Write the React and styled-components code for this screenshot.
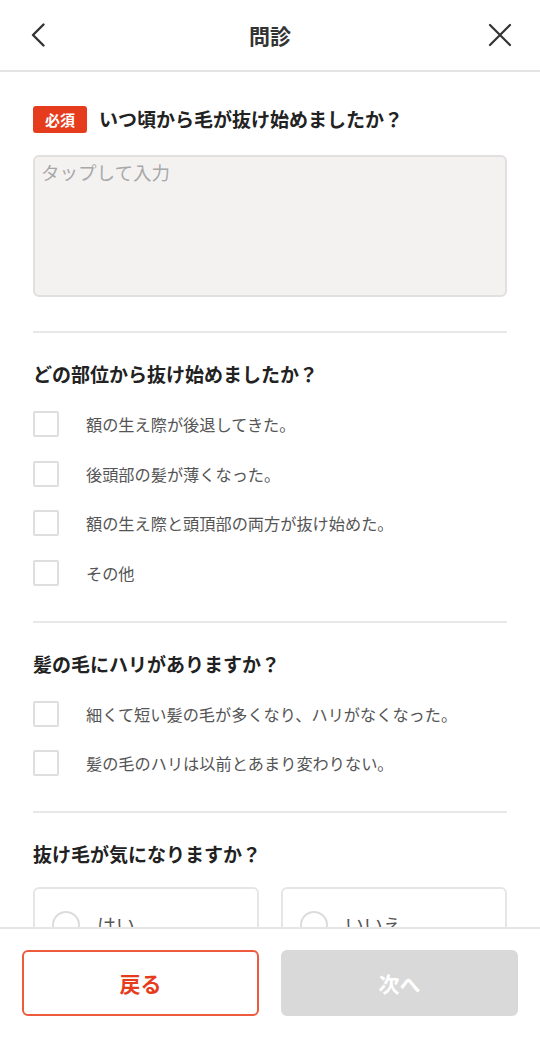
import React from "react";
import styled, { createGlobalStyle } from "styled-components";

const GlobalStyle = createGlobalStyle`
  html, body {
    margin: 0;
    padding: 0;
    background: #ffffff;
  }
  body {
    font-family: "Noto Sans CJK JP", "Noto Sans", sans-serif;
    color: #222;
  }
  * {
    box-sizing: border-box;
  }
`;

const Page = styled.div`
  display: flex;
  flex-direction: column;
  height: 100vh;
  overflow: hidden;
`;

const Header = styled.header`
  flex: none;
  height: 72px;
  display: flex;
  align-items: center;
  justify-content: space-between;
  padding: 0 28px 0 28px;
  border-bottom: 2px solid #e4e4e4;
`;

const IconButton = styled.button`
  width: 24px;
  height: 24px;
  padding: 0;
  border: none;
  background: none;
  display: flex;
  align-items: center;
  justify-content: center;
  color: #333;
`;

const Title = styled.h1`
  margin: 0;
  font-size: 21px;
  font-weight: 700;
  color: #333;
`;

const Content = styled.main`
  flex: 1;
  overflow: hidden;
  padding: 0 33px;
`;

const Section = styled.section`
  padding: ${(p) => (p.$first ? "33px 0 34px" : "28px 0 34.5px")};
  border-bottom: ${(p) => (p.$last ? "none" : "2px solid #e8e8e8")};
`;

const QuestionRow = styled.div`
  display: flex;
  align-items: center;
  gap: 12px;
  height: 28px;
`;

const Badge = styled.span`
  display: inline-flex;
  align-items: center;
  justify-content: center;
  width: 54px;
  height: 27px;
  border-radius: 3px;
  background: #e63c1e;
  color: #fff;
  font-size: 15px;
  font-weight: 700;
`;

const Question = styled.h2`
  margin: 0;
  font-size: 19px;
  line-height: 26px;
  font-weight: 700;
  color: #222;
`;

const TextArea = styled.textarea`
  display: block;
  width: 100%;
  height: 142px;
  margin-top: 22px;
  padding: 2px 6px;
  resize: none;
  border: 2px solid #e2e0df;
  border-radius: 6px;
  background: #f4f2f1;
  font-family: inherit;
  font-size: 18.5px;
  color: #333;

  &::placeholder {
    color: #a8a8a8;
  }
`;

const Options = styled.div`
  display: flex;
  flex-direction: column;
  gap: 23.7px;
  margin-top: 24px;
`;

const CheckRow = styled.label`
  display: flex;
  align-items: center;
  gap: 27px;
  height: 26px;
`;

const Box = styled.span`
  flex: none;
  width: 26px;
  height: 26px;
  border: 2px solid #dedede;
  border-radius: 2px;
  background: #fff;
`;

const OptionText = styled.span`
  font-size: 16.2px;
  color: #555;
`;

const RadioGrid = styled.div`
  display: grid;
  grid-template-columns: 1fr 1fr;
  gap: 22px;
  margin-top: 20px;
`;

const RadioCard = styled.label`
  display: flex;
  align-items: flex-start;
  gap: 17px;
  height: 80px;
  padding: 22px 17px;
  border: 2px solid #e6e6e6;
  border-radius: 6px;
`;

const Circle = styled.span`
  flex: none;
  width: 28px;
  height: 28px;
  border: 2px solid #dcdcdc;
  border-radius: 50%;
`;

const RadioText = styled.span`
  font-size: 19px;
  line-height: 28px;
  color: #555;
`;

const Footer = styled.footer`
  flex: none;
  display: grid;
  grid-template-columns: 1fr 1fr;
  gap: 22px;
  padding: 21px 22px 24px;
  border-top: 2px solid #e6e6e6;
  background: #fff;
`;

const FooterButton = styled.button`
  height: 66px;
  border-radius: 6px;
  font-family: inherit;
  font-size: 21px;
  font-weight: 700;
  border: ${(p) => (p.$outline ? "2px solid #ee5a3e" : "none")};
  background: ${(p) => (p.$outline ? "#fff" : "#d9d9d9")};
  color: ${(p) => (p.$outline ? "#e63c1e" : "#fff")};
`;

const ChevronLeft = () => (
  <svg width="24" height="24" viewBox="0 0 24 24" fill="none">
    <path
      d="M15.5 1.5L5 12l10.5 10.5"
      stroke="currentColor"
      strokeWidth="2.4"
      strokeLinecap="round"
      strokeLinejoin="round"
    />
  </svg>
);

const CloseIcon = () => (
  <svg width="24" height="24" viewBox="0 0 24 24" fill="none">
    <path
      d="M2 2l20 20M22 2L2 22"
      stroke="currentColor"
      strokeWidth="2.2"
      strokeLinecap="round"
    />
  </svg>
);

const Checkbox = ({ label }) => (
  <CheckRow>
    <Box />
    <OptionText>{label}</OptionText>
  </CheckRow>
);

const sections = [
  {
    question: "どの部位から抜け始めましたか？",
    options: [
      "額の生え際が後退してきた。",
      "後頭部の髪が薄くなった。",
      "額の生え際と頭頂部の両方が抜け始めた。",
      "その他",
    ],
  },
  {
    question: "髪の毛にハリがありますか？",
    options: [
      "細くて短い髪の毛が多くなり、ハリがなくなった。",
      "髪の毛のハリは以前とあまり変わりない。",
    ],
  },
];

const App = () => {
  return (
    <>
      <GlobalStyle />
      <Page>
        <Header>
          <IconButton aria-label="戻る">
            <ChevronLeft />
          </IconButton>
          <Title>問診</Title>
          <IconButton aria-label="閉じる">
            <CloseIcon />
          </IconButton>
        </Header>

        <Content>
          <Section $first>
            <QuestionRow>
              <Badge>必須</Badge>
              <Question>いつ頃から毛が抜け始めましたか？</Question>
            </QuestionRow>
            <TextArea placeholder="タップして入力" />
          </Section>

          {sections.map((s) => (
            <Section key={s.question}>
              <Question>{s.question}</Question>
              <Options>
                {s.options.map((o) => (
                  <Checkbox key={o} label={o} />
                ))}
              </Options>
            </Section>
          ))}

          <Section $last>
            <Question>抜け毛が気になりますか？</Question>
            <RadioGrid>
              <RadioCard>
                <Circle />
                <RadioText>はい</RadioText>
              </RadioCard>
              <RadioCard>
                <Circle />
                <RadioText>いいえ</RadioText>
              </RadioCard>
            </RadioGrid>
          </Section>
        </Content>

        <Footer>
          <FooterButton $outline>戻る</FooterButton>
          <FooterButton disabled>次へ</FooterButton>
        </Footer>
      </Page>
    </>
  );
};

export default App;
